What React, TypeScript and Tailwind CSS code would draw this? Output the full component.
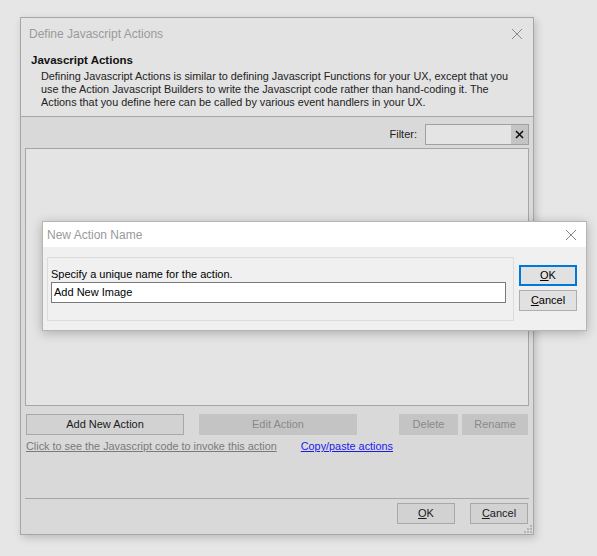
const font = "font-['Liberation_Sans','DejaVu_Sans',sans-serif]";

const Btn = (props: { label: React.ReactNode; className?: string; disabled?: boolean }) => (
    <div
        className={`flex h-[21px] items-center justify-center border text-[11px] ${
            props.disabled
                ? 'border-[#c4c4c4] bg-[#c4c4c4] text-[#8a8a8a]'
                : 'border-[#a8a8a8] bg-[#d2d2d2] text-[#1a1a1a]'
        } ${props.className ?? ''}`}
    >
        {props.label}
    </div>
);

const CloseX = (props: { className?: string }) => (
    <svg className={props.className} width="12" height="12" viewBox="0 0 12 12">
        <path d="M1 1 L11 11 M11 1 L1 11" stroke="currentColor" strokeWidth="1" />
    </svg>
);

const App: React.FC = () => {
    return (
        <div className={`relative h-[556px] w-[597px] overflow-hidden bg-[#e6e6e6] pl-[20px] pt-[17px] ${font}`}>
            {/* main dialog */}
            <div className="flex h-[518px] w-[514px] flex-col border border-[#a6a6a6] bg-[#d9d9d9] shadow-[2px_3px_8px_rgba(0,0,0,0.18)]">
                <div className="h-[99px] border-b border-[#a6a6a6] bg-[#e3e3e3]">
                    <div className="flex h-[31px] items-center justify-between pl-[8px] pr-[10px]">
                        <span className="text-[12px] text-[#9a9a9a]">Define Javascript Actions</span>
                        <CloseX className="text-[#8c8c8c]" />
                    </div>
                    <div className="mt-[4px] pl-[10px] text-[11.5px] font-bold leading-[15px] text-[#111]">Javascript Actions</div>
                    <p className="mt-[2px] pl-[20px] pr-[8px] text-[10.85px] leading-[13px] text-[#222]">
                        Defining Javascript Actions is similar to defining Javascript Functions for your UX, except that you
                        use the Action Javascript Builders to write the Javascript code rather than hand-coding it. The
                        Actions that you define here can be called by various event handlers in your UX.
                    </p>
                </div>

                <div className="flex h-[31px] items-center justify-end pr-[4px] pt-[4px]">
                    <span className="mr-[8px] text-[11px] text-[#222]">Filter:</span>
                    <div className="flex h-[21px] w-[104px] border border-[#a0a0a0] bg-[#e4e4e4]">
                        <div className="flex-1" />
                        <div className="flex w-[17px] items-center justify-center bg-[#c4c4c4]">
                            <svg width="9" height="9" viewBox="0 0 9 9">
                                <path d="M1 1 L8 8 M8 1 L1 8" stroke="#111" strokeWidth="1.6" />
                            </svg>
                        </div>
                    </div>
                </div>

                <div className="mx-[4px] h-[258px] border border-[#a6a6a6] bg-[#e4e4e4]" />

                <div className="mt-[8px] flex px-[5px]">
                    <Btn label="Add New Action" className="w-[158px]" />
                    <Btn label="Edit Action" disabled className="ml-[15px] w-[158px]" />
                    <Btn label="Delete" disabled className="ml-[42px] w-[59px]" />
                    <Btn label="Rename" disabled className="ml-[4px] w-[66px]" />
                </div>

                <div className="mt-[3px] flex px-[5px] text-[10.85px] leading-[16px]">
                    <span className="text-[#7a7a7a] underline">Click to see the Javascript code to invoke this action</span>
                    <span className="ml-[24px] text-[#1a1aee] underline">Copy/paste actions</span>
                </div>

                <div className="mx-[4px] mt-[44px] border-t border-[#a6a6a6]" />

                <div className="relative flex flex-1 justify-end pr-[5px] pt-[4px]">
                    <Btn label={<><u>O</u>K</>} className="w-[58px]" />
                    <Btn label={<><u>C</u>ancel</>} className="ml-[15px] w-[58px]" />
                    <svg className="absolute bottom-[1px] right-[1px]" width="8" height="8" viewBox="0 0 8 8">
                        <rect x="6" y="0" width="2" height="2" fill="#b4b4b4" />
                        <rect x="3" y="3" width="2" height="2" fill="#b4b4b4" />
                        <rect x="6" y="3" width="2" height="2" fill="#b4b4b4" />
                        <rect x="0" y="6" width="2" height="2" fill="#b4b4b4" />
                        <rect x="3" y="6" width="2" height="2" fill="#b4b4b4" />
                        <rect x="6" y="6" width="2" height="2" fill="#b4b4b4" />
                    </svg>
                </div>
            </div>

            {/* modal */}
            <div className="absolute left-[42px] top-[221px] flex h-[110px] w-[545px] flex-col border border-[#b5b5b5] bg-[#f0f0f0] shadow-[0_2px_10px_rgba(0,0,0,0.25)]">
                <div className="flex h-[25px] items-center justify-between bg-white pl-[4px] pr-[9px]">
                    <span className="text-[12px] text-[#9a9a9a]">New Action Name</span>
                    <CloseX className="text-[#888]" />
                </div>
                <div className="flex px-[4px] pt-[10px]">
                    <div className="h-[64px] w-[467px] border border-[#dcdcdc] px-[3px] pt-[9px]">
                        <div className="text-[11px] leading-[15px] text-black">Specify a unique name for the action.</div>
                        <div className="flex h-[21px] w-[455px] items-center border border-[#7a7a7a] bg-white px-[2px] text-[11px] text-black">
                            Add New Image
                        </div>
                    </div>
                    <div className="ml-[5px] flex flex-col pt-[8px]">
                        <div className="flex h-[21px] w-[58px] items-center justify-center border-2 border-[#0078d7] bg-[#e1e1e1] text-[11px] text-black">
                            <span><u>O</u>K</span>
                        </div>
                        <div className="mt-[4px] flex h-[21px] w-[58px] items-center justify-center border border-[#adadad] bg-[#e1e1e1] text-[11px] text-black">
                            <span><u>C</u>ancel</span>
                        </div>
                    </div>
                </div>
            </div>
        </div>
    );
};

export default App;
